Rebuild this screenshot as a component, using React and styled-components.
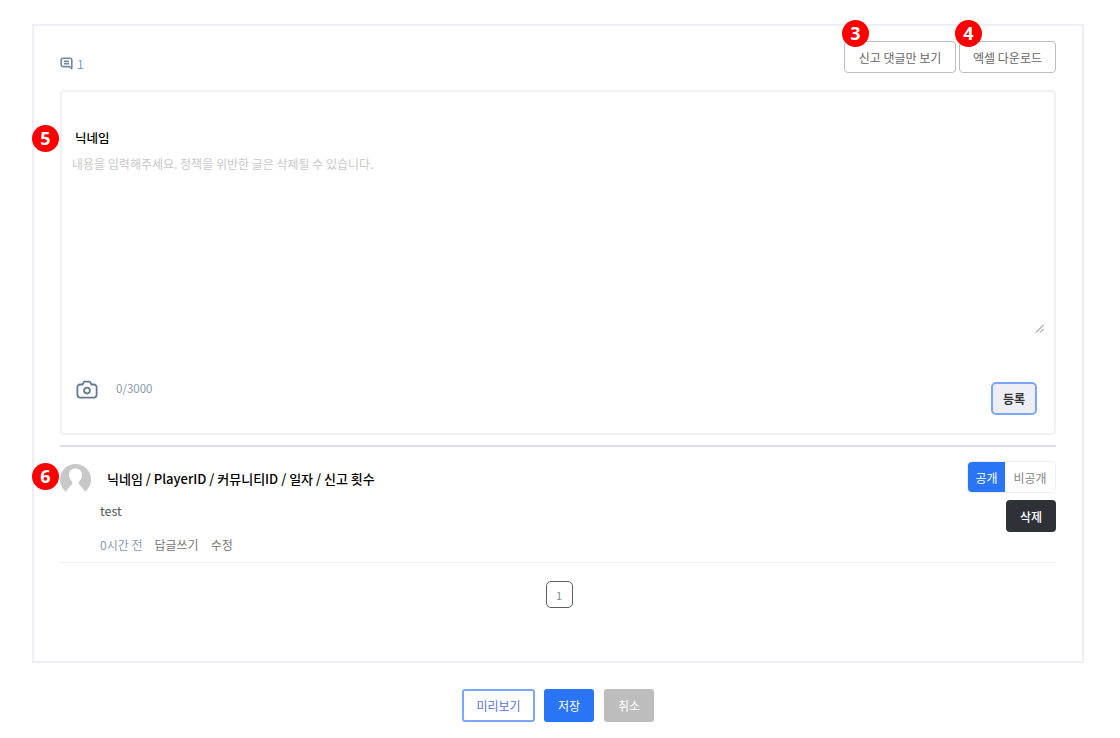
import React from "react";
import styled, { createGlobalStyle } from "styled-components";

const GlobalStyle = createGlobalStyle`
  html, body {
    margin: 0;
    padding: 0;
    background: #fff;
  }
  body {
    font-family: "Noto Sans CJK KR", "Noto Sans", sans-serif;
    color: #333;
  }
`;

function CommentIcon() {
  return (
    <svg width="13" height="13" viewBox="0 0 13 13" fill="none" stroke="#7689a0" strokeWidth="1.6">
      <path d="M3 1.2h7a1.8 1.8 0 0 1 1.800 1.800v8.600L9.400 9.600H3A1.800 1.800 0 0 1 1.200 7.800V3A1.800 1.800 0 0 1 3 1.200z" strokeLinejoin="round" />
      <path d="M4 4.200h5M4 6.600h5" />
    </svg>
  );
}

function CameraIcon() {
  return (
    <svg width="22" height="20" viewBox="0 0 22 20" fill="none" stroke="#64788f" strokeWidth="1.8" strokeLinejoin="round">
      <path d="M4 4.500h2.600l1.200-2.400a1 1 0 0 1 .9-.5h4.600a1 1 0 0 1 .9.5l1.200 2.400H18a2.600 2.600 0 0 1 2.600 2.600v7.700a2.800 2.800 0 0 1-2.800 2.800H4.200a2.800 2.800 0 0 1-2.800-2.800V7.100A2.600 2.600 0 0 1 4 4.500z" />
      <circle cx="11" cy="10.600" r="2.900" />
    </svg>
  );
}

function AvatarIcon() {
  return (
    <svg width="31" height="31" viewBox="0 0 31 31">
      <circle cx="15.500" cy="15.500" r="15.500" fill="#c8c8c8" />
      <path d="M15.500 4.500c3.800 0 6.500 2.600 6.500 6.300 0 3-1.300 5.300-3.200 6.900v2.300l5.700 6.500V31H6.500v-4.500l5.700-6.500v-2.300C10.300 16.100 9 13.800 9 10.800c0-3.700 2.700-6.300 6.500-6.300z" fill="#fff" />
    </svg>
  );
}

function ResizeGrip() {
  return (
    <svg width="9" height="9" viewBox="0 0 9 9" stroke="#777" strokeWidth="1" fill="none">
      <path d="M1 8.500L8.500 1M5 8.500L8.500 5" />
    </svg>
  );
}

export default function App() {
  return (
    <>
      <GlobalStyle />
      <Page>
        <Panel>
          <TopBar>
            <CommentCount>
              <CommentIcon />
              <span>1</span>
            </CommentCount>
            <TopActions>
              <OutlineButton>
                <Badge $left={-3} $top={-22}>3</Badge>
                신고 댓글만 보기
              </OutlineButton>
              <OutlineButton $wide>
                <Badge $left={-5} $top={-22}>4</Badge>
                엑셀 다운로드
              </OutlineButton>
            </TopActions>
          </TopBar>

          <Composer>
            <Badge $left={-30} $top={33}>5</Badge>
            <Nickname>닉네임</Nickname>
            <Placeholder>내용을 입력해주세요. 정책을 위반한 글은 삭제될 수 있습니다.</Placeholder>
            <Grip>
              <ResizeGrip />
            </Grip>
            <ComposerFooter>
              <ComposerInfo>
                <CameraIcon />
                <Counter>0/3000</Counter>
              </ComposerInfo>
              <RegisterButton>등록</RegisterButton>
            </ComposerFooter>
          </Composer>

          <CommentRow>
            <Badge $left={-28} $top={16}>6</Badge>
            <CommentMain>
              <CommentHead>
                <AvatarIcon />
                <CommentTitle>닉네임 / PlayerID / 커뮤니티ID / 일자 / 신고 횟수</CommentTitle>
              </CommentHead>
              <CommentBody>test</CommentBody>
              <CommentMeta>
                <MetaTime>0시간 전</MetaTime>
                <MetaLink>답글쓰기</MetaLink>
                <MetaLink>수정</MetaLink>
              </CommentMeta>
            </CommentMain>
            <CommentSide>
              <Toggle>
                <ToggleItem $active>공개</ToggleItem>
                <ToggleItem>비공개</ToggleItem>
              </Toggle>
              <DeleteButton>삭제</DeleteButton>
            </CommentSide>
          </CommentRow>

          <Pagination>
            <PageButton>1</PageButton>
          </Pagination>
        </Panel>

        <Footer>
          <PreviewButton>미리보기</PreviewButton>
          <SaveButton>저장</SaveButton>
          <CancelButton>취소</CancelButton>
        </Footer>
      </Page>
    </>
  );
}

const Page = styled.div`
  width: 1120px;
  height: 738px;
  box-sizing: border-box;
  padding: 24px 36px 0 32px;
  overflow: hidden;
`;

const Panel = styled.div`
  box-sizing: border-box;
  height: 639px;
  border: 2px solid #eeeef8;
  padding: 15px 26px 0;
`;

const TopBar = styled.div`
  display: flex;
  justify-content: space-between;
  height: 32px;
`;

const CommentCount = styled.div`
  display: flex;
  align-items: center;
  gap: 4px;
  padding-top: 13px;
  box-sizing: border-box;
  height: 32px;
  font-size: 12px;
  color: #6fa3c8;
`;

const TopActions = styled.div`
  display: flex;
  gap: 3px;
`;

const OutlineButton = styled.button`
  position: relative;
  box-sizing: border-box;
  width: ${(p) => (p.$wide ? "97px" : "112px")};
  height: 32px;
  padding: 0;
  background: #fff;
  border: 1px solid #bdbdbd;
  border-radius: 4px;
  font-family: inherit;
  font-size: 12px;
  color: #666;
`;

const Badge = styled.span`
  position: absolute;
  left: ${(p) => p.$left}px;
  top: ${(p) => p.$top}px;
  width: 27px;
  height: 27px;
  border-radius: 50%;
  background: #fe0000;
  color: #fff;
  font-family: "Noto Sans", sans-serif;
  font-size: 18px;
  font-weight: 700;
  line-height: 27px;
  text-align: center;
`;

const Composer = styled.div`
  position: relative;
  box-sizing: border-box;
  height: 345px;
  margin-top: 17px;
  border: 2px solid #f1f1f4;
  border-radius: 4px;
  padding: 37px 16px 0 10px;
`;

const Nickname = styled.div`
  padding-left: 3px;
  font-size: 12.5px;
  font-weight: 500;
  line-height: 18px;
  color: #000;
`;

const Placeholder = styled.div`
  margin-top: 8px;
  font-size: 12px;
  line-height: 18px;
  color: #c8c8c8;
`;

const Grip = styled.div`
  position: absolute;
  right: 10px;
  top: 232px;
  line-height: 0;
`;

const ComposerFooter = styled.div`
  position: absolute;
  left: 14px;
  right: 17px;
  top: 288px;
  display: flex;
  justify-content: space-between;
  align-items: flex-start;
`;

const ComposerInfo = styled.div`
  display: flex;
  align-items: flex-start;
  gap: 18px;
`;

const Counter = styled.span`
  font-size: 11.5px;
  line-height: 17px;
  color: #8a97a6;
`;

const RegisterButton = styled.button`
  box-sizing: border-box;
  width: 46px;
  height: 33px;
  margin-top: 2px;
  background: #eeeef6;
  border: 2px solid #7aa7f7;
  border-radius: 5px;
  font-family: inherit;
  font-size: 12px;
  font-weight: 700;
  color: #333;
  padding: 0;
`;

const CommentRow = styled.div`
  position: relative;
  display: flex;
  justify-content: space-between;
  box-sizing: border-box;
  height: 118px;
  margin-top: 10px;
  border-top: 2px solid #dddde8;
  border-bottom: 1px solid #eeeef4;
`;

const CommentMain = styled.div`
  display: flex;
  flex-direction: column;
  padding-top: 17px;
`;

const CommentHead = styled.div`
  display: flex;
  align-items: center;
  gap: 16px;
`;

const CommentTitle = styled.div`
  font-size: 13px;
  font-weight: 500;
  color: #000;
  margin-top: -3px;
`;

const CommentBody = styled.div`
  margin: 7px 0 0 40px;
  font-size: 12.5px;
  line-height: 18px;
  color: #555;
`;

const CommentMeta = styled.div`
  display: flex;
  gap: 12px;
  margin: 16px 0 0 40px;
  font-size: 12px;
  line-height: 18px;
`;

const MetaTime = styled.span`
  color: #8a9ab0;
`;

const MetaLink = styled.span`
  color: #777;
`;

const CommentSide = styled.div`
  display: flex;
  flex-direction: column;
  align-items: flex-end;
  padding-top: 14px;
  gap: 7px;
`;

const Toggle = styled.div`
  display: flex;
  box-sizing: border-box;
  height: 32px;
  border: 1px solid #eeeeee;
  border-radius: 5px;
  overflow: hidden;
`;

const ToggleItem = styled.div`
  display: flex;
  align-items: center;
  justify-content: center;
  width: ${(p) => (p.$active ? "37px" : "50px")};
  margin: ${(p) => (p.$active ? "-1px 0 -1px -1px" : "0")};
  background: ${(p) => (p.$active ? "#2a75f5" : "#fff")};
  color: ${(p) => (p.$active ? "#fff" : "#888")};
  font-size: 12px;
  padding-left: ${(p) => (p.$active ? "1px" : "0")};
`;

const DeleteButton = styled.button`
  width: 50px;
  height: 32px;
  padding: 0;
  background: #2e3138;
  border: 0;
  border-radius: 4px;
  font-family: inherit;
  font-size: 12px;
  font-weight: 500;
  color: #fff;
`;

const Pagination = styled.div`
  display: flex;
  justify-content: center;
  margin-top: 18px;
  padding-left: 2px;
`;

const PageButton = styled.div`
  box-sizing: border-box;
  width: 27px;
  height: 27px;
  display: flex;
  align-items: center;
  justify-content: center;
  border: 1px solid #5c5f66;
  border-radius: 5px;
  font-size: 11px;
  color: #888;
`;

const Footer = styled.div`
  display: flex;
  justify-content: center;
  gap: 9px;
  margin-top: 26px;
`;

const FooterButton = styled.button`
  box-sizing: border-box;
  height: 33px;
  padding: 0;
  border-radius: 3px;
  font-family: inherit;
  font-size: 12px;
`;

const PreviewButton = styled(FooterButton)`
  width: 73px;
  background: #fff;
  border: 2px solid #7aa7f7;
  color: #5a6fe0;
`;

const SaveButton = styled(FooterButton)`
  width: 50px;
  margin-right: 1px;
  background: #2a75f5;
  border: 0;
  color: #fff;
`;

const CancelButton = styled(FooterButton)`
  width: 50px;
  background: #bdbdbd;
  border: 0;
  color: #fff;
`;
